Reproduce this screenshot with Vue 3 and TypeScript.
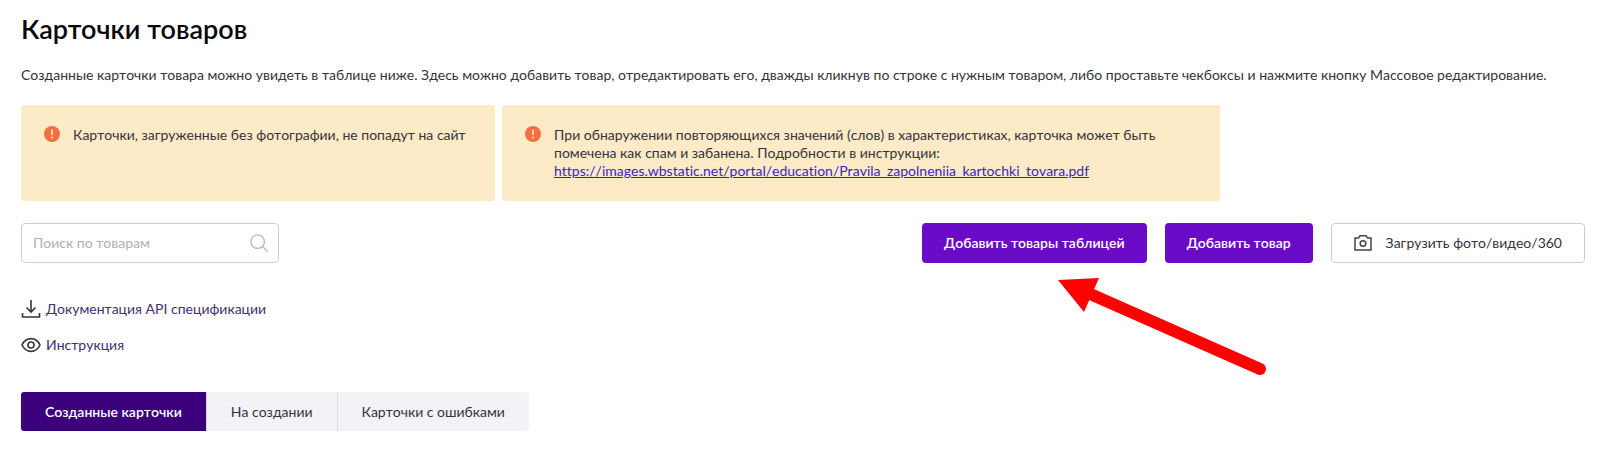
<script setup lang="ts">
import { ref } from 'vue'

const query = ref('')
const active = ref(0)
const tabs: string[] = ['Созданные карточки', 'На создании', 'Карточки с ошибками']
</script>

<template>
  <main class="page">
    <h1>Карточки товаров</h1>
    <p class="intro">Созданные карточки товара можно увидеть в таблице ниже. Здесь можно добавить товар, отредактировать его, дважды кликнув по строке с нужным товаром, либо проставьте чекбоксы и нажмите кнопку Массовое редактирование.</p>

    <section class="notices">
      <div class="notice">
        <svg class="alert" viewBox="0 0 16 16" aria-hidden="true"><circle cx="8" cy="8" r="8" fill="#f2703f" /><path d="M8 3.500v5.500" stroke="#fff0d8" stroke-width="1.600" /><circle cx="8" cy="11.600" r="1" fill="#fff0d8" /></svg>
        <p>Карточки, загруженные без фотографии, не попадут на сайт</p>
      </div>
      <div class="notice wide">
        <svg class="alert" viewBox="0 0 16 16" aria-hidden="true"><circle cx="8" cy="8" r="8" fill="#f2703f" /><path d="M8 3.500v5.500" stroke="#fff0d8" stroke-width="1.600" /><circle cx="8" cy="11.600" r="1" fill="#fff0d8" /></svg>
        <p>При обнаружении повторяющихся значений (слов) в характеристиках, карточка может быть<br>помечена как спам и забанена. Подробности в инструкции:<br><a href="https://images.wbstatic.net/portal/education/Pravila_zapolneniia_kartochki_tovara.pdf">https://images.wbstatic.net/portal/education/Pravila_zapolneniia_kartochki_tovara.pdf</a></p>
      </div>
    </section>

    <div class="toolbar">
      <label class="search">
        <input v-model="query" type="text" placeholder="Поиск по товарам" aria-label="Поиск по товарам">
        <svg viewBox="0 0 20 20" aria-hidden="true"><circle cx="8.500" cy="8.500" r="7.500" /><path d="M14 14L19.500 19.500" /></svg>
      </label>
      <div class="actions">
        <button type="button" class="primary">Добавить товары таблицей</button>
        <button type="button" class="primary">Добавить товар</button>
        <button type="button" class="outline">
          <svg viewBox="0 0 18 16" aria-hidden="true"><path d="M1 3h3.500l1.500-2.200h6L13.500 3H17v12H1z" /><circle cx="9" cy="8.500" r="2.800" /></svg>
          Загрузить фото/видео/360
        </button>
        <svg class="arrow" viewBox="0 0 210 100" aria-hidden="true"><path d="M30 15L202 91" stroke="#fe0202" stroke-width="12" stroke-linecap="round" /><path d="M0 2L41 0L26 34z" fill="#fe0202" /></svg>
      </div>
    </div>

    <nav class="links">
      <a href="#api">
        <svg viewBox="0 0 20 20" aria-hidden="true"><path d="M10 1v12M5.500 8.500L10 13l4.500-4.500M1.500 14v4h17v-4" /></svg>
        Документация API спецификации
      </a>
      <a href="#guide">
        <svg viewBox="0 0 20 20" aria-hidden="true"><path d="M1 10C5 1.500 15 1.500 19 10 15 18.500 5 18.500 1 10z" /><circle cx="10" cy="10" r="3" /></svg>
        Инструкция
      </a>
    </nav>

    <div class="tabs" role="tablist">
      <button v-for="(tab, i) in tabs" :key="tab" type="button" role="tab" :aria-selected="active === i" :class="{ active: active === i }" @click="active = i">{{ tab }}</button>
    </div>
  </main>
</template>

<style>
body { margin: 0; background: #fff; }
</style>

<style scoped>
.page { padding: 12px 15px 18px 21px; font: 14px/18px Lato, sans-serif; font-kerning: none; font-variant-ligatures: none; color: #35333b; }
h1 { margin: 0; font-size: 27px; line-height: 34px; font-weight: 600; font-kerning: normal; color: #08080a; }
p { margin: 0; }
.intro { margin-top: 20px; white-space: nowrap; }
.notices { display: flex; gap: 7px; margin-top: 21px; }
.notice { box-sizing: border-box; display: flex; gap: 13px; min-width: 474px; min-height: 96px; padding: 21px 21px 21px 23px; border-radius: 3px; background: #fdeac7; white-space: nowrap; }
.wide { min-width: 718px; }
.alert { flex: none; width: 16px; height: 16px; }
.notice a { color: #3b1ec8; }
.toolbar { display: flex; justify-content: space-between; margin-top: 22px; }
.search { box-sizing: border-box; display: flex; align-items: center; width: 258px; height: 40px; padding: 0 10px 0 11px; border: 1px solid #cfcdd3; border-radius: 4px; }
.search input { flex: 1; min-width: 0; padding: 0; border: 0; outline: 0; background: none; font: inherit; color: inherit; }
.search input::placeholder { color: #b0aeb5; opacity: 1; }
.search svg { width: 18px; height: 18px; fill: none; stroke: #b9b8bc; stroke-width: 1.5; }
.actions { position: relative; display: flex; gap: 18px; }
button { font: inherit; font-kerning: inherit; cursor: pointer; white-space: nowrap; }
.actions button { height: 40px; padding: 0 22px; border: 0; border-radius: 4px; }
.primary { background: #6a0bc8; color: #fff; font-weight: 600; }
.actions .outline { display: flex; align-items: center; gap: 14px; border: 1px solid #cfcdd3; background: #fff; color: #35333b; }
.outline svg { width: 18px; height: 16px; fill: none; stroke: #46444c; stroke-width: 1.5; }
.arrow { position: absolute; right: 317px; top: 55px; width: 210px; height: 100px; pointer-events: none; }
.links { display: flex; flex-direction: column; align-items: flex-start; gap: 16px; margin-top: 36px; }
.links a { display: flex; align-items: center; gap: 5px; height: 20px; color: #44306c; text-decoration: none; }
.links svg { width: 20px; height: 20px; fill: none; stroke: #35333b; stroke-width: 1.6; }
.tabs { display: flex; margin-top: 37px; }
.tabs button { height: 39px; padding: 0 24px; border: 0; background: #f3f2f6; color: #35333b; }
.tabs button + button { border-left: 1px solid #dddbe2; }
.tabs button:first-child { border-radius: 3px 0 0 3px; }
.tabs button:last-child { border-radius: 0 3px 3px 0; }
.tabs .active { background: #3c007c; color: #fff; font-weight: 600; }
</style>
